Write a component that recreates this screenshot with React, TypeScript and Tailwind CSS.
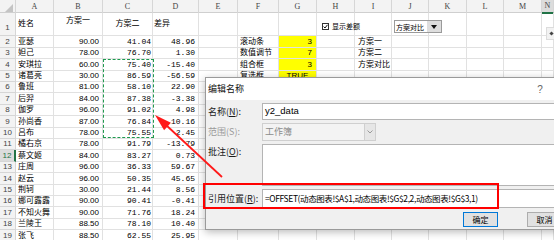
import React from "react";

const COLS =
  "grid grid-cols-[16px_38px_49px_50px_46px_39px_41px_38px_38px_37px_37px_38px_37px_38px_1fr]";
const LETTERS = ["A", "B", "C", "D", "E", "F", "G", "H", "I", "J", "K", "L", "M", "N"];

const SANS = "font-['Liberation_Sans','Noto_Sans_CJK_SC',sans-serif]";
const MONO = "font-['Liberation_Mono','Noto_Sans_CJK_SC',monospace]";
const UI = "font-['Noto_Sans_CJK_SC','Liberation_Sans',sans-serif]";

type Row = { name: string; b: string; c: string; d: string; f?: string; g?: string; i?: string };

const ROWS: Row[] = [
  { name: "亚瑟", b: "90.00", c: "41.04", d: "48.96", f: "滚动条", g: "3", i: "方案一" },
  { name: "妲己", b: "78.00", c: "76.70", d: "1.30", f: "数值调节", g: "7", i: "方案二" },
  { name: "安琪拉", b: "60.00", c: "75.40", d: "-15.40", f: "组合框", g: "3", i: "方案对比" },
  { name: "诸葛亮", b: "30.00", c: "86.59", d: "-56.59", f: "复选框", g: "TRUE" },
  { name: "鲁班", b: "81.00", c: "58.10", d: "22.90" },
  { name: "后羿", b: "84.00", c: "87.38", d: "-3.38" },
  { name: "伽罗", b: "96.00", c: "91.02", d: "4.98" },
  { name: "孙尚香", b: "87.00", c: "76.84", d: "10.16" },
  { name: "吕布", b: "78.00", c: "75.55", d: "2.45" },
  { name: "橘右京", b: "78.00", c: "91.79", d: "-13.79" },
  { name: "蔡文姬", b: "84.00", c: "83.27", d: "0.73" },
  { name: "庄周", b: "96.00", c: "36.33", d: "59.67" },
  { name: "赵云", b: "96.00", c: "50.35", d: "45.65" },
  { name: "荆轲", b: "30.00", c: "21.44", d: "8.56" },
  { name: "娜可露露", b: "90.00", c: "90.41", d: "-0.41" },
  { name: "不知火舞", b: "90.00", c: "71.76", d: "18.24" },
  { name: "兰陵王", b: "88.50", c: "78.10", d: "10.40" },
  { name: "张飞", b: "88.50", c: "62.55", d: "25.95" },
];

// row heights averaging 11.4px, as in the zoomed sheet
const HEIGHTS = [
  "h-[12px]", "h-[11px]", "h-[12px]", "h-[11px]", "h-[11px]", "h-[12px]",
  "h-[11px]", "h-[12px]", "h-[11px]", "h-[11px]", "h-[12px]", "h-[11px]",
  "h-[12px]", "h-[11px]", "h-[11px]", "h-[12px]", "h-[11px]", "h-[12px]",
];

const cell = "border-r border-b border-[#e1e1e1] flex items-center overflow-visible whitespace-nowrap";

function HeaderRow() {
  return (
    <div className={`${COLS} h-[13px] bg-[#f3f3f3] border-b border-[#cfcfcf]`}>
      <div className="relative border-r border-[#d6d6d6]">
        <svg className="absolute left-[5px] top-[4px]" width="8" height="8" viewBox="0 0 8 8">
          <polygon points="8,0 8,8 0,8" fill="#c4c4c4" />
        </svg>
      </div>
      {LETTERS.map((l) => (
        <div
          key={l}
          className={`flex items-center justify-center border-r border-[#d6d6d6] text-[8px] text-[#444] font-['Liberation_Serif',serif] ${
            l === "N" ? "bg-[#dcdcdc] border-b-2 border-b-[#217346]" : ""
          }`}
        >
          {l}
        </div>
      ))}
    </div>
  );
}

function TitleRow() {
  return (
    <div className={`${COLS} h-[23px] text-[8px] ${SANS}`}>
      <div className="flex items-end justify-center pb-[1px] bg-[#f3f3f3] border-r border-b border-[#d6d6d6] text-[#444]">
        1
      </div>
      <div className={`${cell} pl-[2px]`}>姓名</div>
      <div className={`${cell} !items-start justify-center pt-[2px]`}>方案一</div>
      <div className={`${cell} justify-center`}>方案二</div>
      <div className={`${cell} pl-[1px]`}>差异</div>
      {Array.from({ length: 10 }).map((_, k) => (
        <div key={k} className={cell} />
      ))}
    </div>
  );
}

function DataRow({ row, n, h }: { row: Row; n: number; h: string }) {
  const active = n === 12;
  return (
    <div className={`${COLS} ${h} text-[8px] leading-[10px] ${SANS}`}>
      <div
        className={`flex items-center justify-center border-b border-[#d6d6d6] ${
          active ? "bg-[#dcdcdc] text-[#217346] border-r-2 border-r-[#217346]" : "bg-[#f3f3f3] text-[#444] border-r border-r-[#d6d6d6]"
        }`}
      >
        {n}
      </div>
      <div className={`${cell} pl-[2px]`}>{row.name}</div>
      <div className={`${cell} justify-end pr-[3px]`}>{row.b}</div>
      <div className={`${cell} justify-end pr-[1px] ${MONO}`}>{row.c}</div>
      <div className={`${cell} justify-end pr-[3px] ${MONO}`}>{row.d}</div>
      <div className={cell} />
      <div className={`${cell} pl-[2px]`}>{row.f}</div>
      <div
        className={`${cell} ${row.g ? "bg-[#ffff00]" : ""} ${
          row.g === "TRUE" ? "justify-center" : "justify-end pr-[4px]"
        }`}
      >
        {row.g}
      </div>
      <div className={cell} />
      <div className={`${cell} pl-[3px]`}>{row.i}</div>
      <div className={cell} />
      <div className={cell} />
      <div className={cell} />
      <div className={cell} />
      <div className={cell} />
    </div>
  );
}

function Label({ children, muted }: { children: React.ReactNode; muted?: boolean }) {
  return (
    <div className={`w-[54px] shrink-0 text-[9px] leading-[12px] ${muted ? "text-[#9a9a9a]" : "text-[#1a1a1a]"}`}>
      {children}
    </div>
  );
}

function NameDialog() {
  return (
    <div
      className={`absolute left-[205px] top-[77px] z-10 flex h-[153px] w-[390px] flex-col border border-[#9a9a9a] bg-[#f0f0f0] shadow-[0_2px_8px_rgba(0,0,0,0.28)] ${UI}`}
    >
      {/* title bar; the close box lies past the crop, so only "?" shows */}
      <div className="flex h-[22px] items-center bg-white pl-[2px] text-[9px] text-[#111]">
        <span>编辑名称</span>
        <span className="flex-1" />
        <span className={`w-[28px] text-center text-[10px] text-[#666] ${SANS}`}>?</span>
        <span className="w-[40px]" />
      </div>
      <div className="flex flex-col gap-[3px] pl-[2px] pr-[10px] pt-[3px]">
        <div className="flex h-[17px] items-center">
          <Label>
            名称(<u>N</u>):
          </Label>
          <div className={`flex h-full flex-1 items-center border border-[#b4b4b4] bg-white pl-[2px] text-[9.5px] text-black ${SANS}`}>
            y2_data
          </div>
        </div>
        <div className="flex h-[18px] items-center">
          <Label muted>范围(S):</Label>
          <div className="flex h-full w-[114px] items-center border border-[#cfcfcf] bg-[#f3f3f3]">
            <span className="flex-1 pl-[2px] text-[9px] text-[#8c8c8c]">工作簿</span>
            <span className="flex h-[16px] w-[11px] items-center justify-center border-l border-[#cfcfcf] bg-[#e6e6e6]">
              <svg width="6" height="4" viewBox="0 0 6 4">
                <polyline points="0.5,0.5 3,3 5.5,0.5" fill="none" stroke="#9a9a9a" strokeWidth="1" />
              </svg>
            </span>
          </div>
        </div>
        <div className="flex h-[42px] items-start">
          <div className="pt-[2px]">
            <Label>
              批注(<u>O</u>):
            </Label>
          </div>
          <div className="h-full flex-1 border border-[#b4b4b4] bg-white" />
        </div>
        <div className="flex h-[19px] items-center">
          <Label>
            引用位置(<u>R</u>):
          </Label>
          <div className="flex h-full flex-1 items-center whitespace-nowrap border border-[#b4b4b4] bg-white pl-[2px] text-[8.5px] tracking-[-0.4px] text-black">
            =OFFSET(动态图表!$A$1,动态图表!$G$2,2,动态图表!$G$3,1)
          </div>
        </div>
      </div>
      <div className="mt-[4px] flex justify-end gap-[29px] pr-[32px]">
        <button className="flex h-[15px] w-[35px] items-center justify-center border border-[#0078d7] bg-[#e1e1e1] text-[8px] text-black">
          确定
        </button>
        <button className="flex h-[15px] w-[35px] items-center justify-center border border-[#adadad] bg-[#e1e1e1] text-[8px] text-black">
          取消
        </button>
      </div>
    </div>
  );
}

export default function App() {
  return (
    <div className="relative h-[240px] w-[554px] overflow-hidden bg-white text-black">
      <HeaderRow />
      <TitleRow />
      {ROWS.map((row, k) => (
        <DataRow key={row.name} row={row} n={k + 2} h={HEIGHTS[k]} />
      ))}

      {/* copy marquee round C4:C10 */}
      <div className="absolute left-[103px] top-[59px] h-[79px] w-[51px] border border-dashed border-[#1f9a4f]" />

      {/* form controls floating over the sheet */}
      <div className={`absolute left-[322px] top-[21px] flex items-center gap-[3px] text-[7px] ${UI}`}>
        <span className="flex h-[7px] w-[7px] items-center justify-center border border-[#333] bg-white">
          <svg width="5" height="5" viewBox="0 0 5 5">
            <polyline points="0.6,2.6 2,4 4.5,0.8" fill="none" stroke="#111" strokeWidth="1" />
          </svg>
        </span>
        <span>显示差额</span>
      </div>
      <div className={`absolute left-[394px] top-[20px] flex h-[13px] w-[48px] items-center border border-[#9a9a9a] bg-white ${UI}`}>
        <span className="flex-1 pl-[1px] text-[7px] leading-[10px]">方案对比</span>
        <span className="flex h-full w-[14px] items-center justify-center bg-[#dedede]">
          <svg width="6" height="4" viewBox="0 0 6 4">
            <polygon points="0,0 6,0 3,4" fill="#111" />
          </svg>
        </span>
      </div>
      <div className="absolute left-[546px] top-[27px] flex h-[13px] w-[10px] items-center justify-center border border-[#dcdcdc] bg-[#f2f2f2]">
        <span className="h-[3px] w-[3px] rotate-45 bg-[#444]" />
      </div>

      <NameDialog />

      {/* red highlight round 引用位置 */}
      <div className="absolute left-[203px] top-[183px] z-20 h-[26px] w-[296px] border-2 border-[#ff0000]" />

      {/* red arrow pointing at the marquee */}
      <svg className="pointer-events-none absolute left-0 top-0 z-20" width="554" height="240" viewBox="0 0 554 240">
        <line x1="222" y1="177" x2="166" y2="125" stroke="#ff1a1a" strokeWidth="1.8" />
        <polygon points="155,115 164.1,130.2 170.9,122.8" fill="#ff1a1a" />
      </svg>
    </div>
  );
}
